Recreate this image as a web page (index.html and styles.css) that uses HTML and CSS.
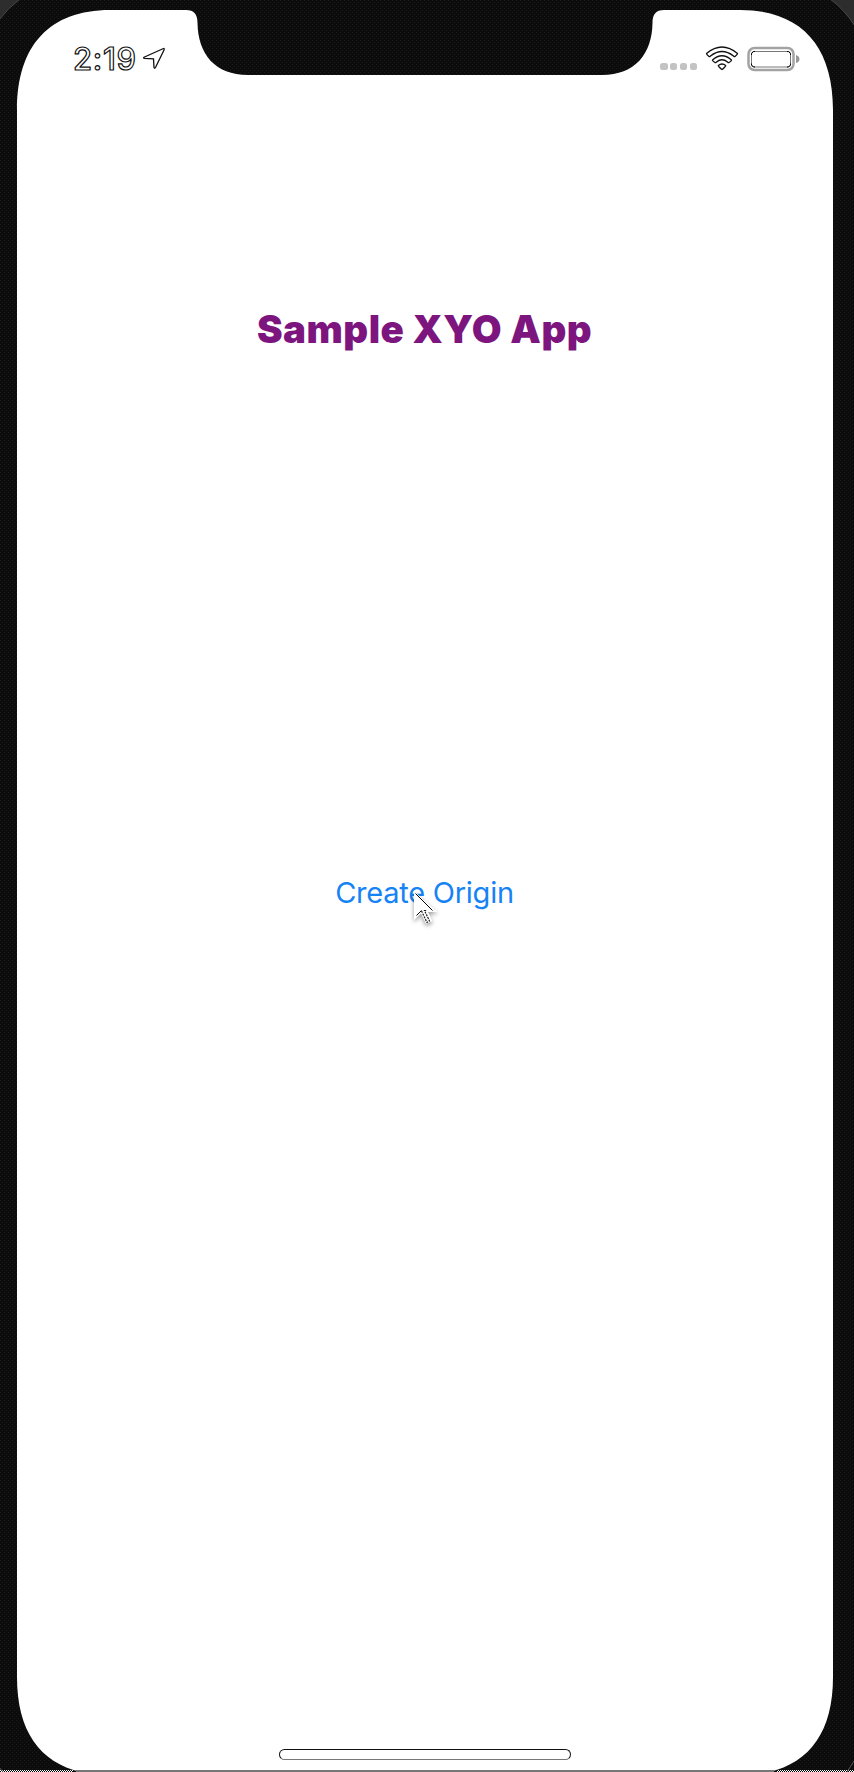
FILE: index.html
```html
<!DOCTYPE html>
<html lang="en">
<head>
<meta charset="utf-8">
<title>Sample XYO App</title>
<link rel="stylesheet" href="styles.css">
</head>
<body>
<main class="phone">
  <svg class="frame" viewBox="0 0 854 1772" aria-hidden="true">
    <defs>
      <pattern id="grain" width="4" height="4" patternUnits="userSpaceOnUse"><path fill="#0c0c0c" d="M0 0h4v4H0z"/><path fill="#191919" d="M0 0h1v1H0zM2 2h1v1H2z"/></pattern>
      <pattern id="check" width="2" height="2" patternUnits="userSpaceOnUse"><path fill="#000" d="M0 0h2v2H0z"/><path fill="#fff" d="M0 0h1v1H0zM1 1h1v1H1z"/></pattern>
    </defs>
    <path fill="url(#grain)" d="M0 0h854v1772H0z"/>
    <path fill="#2d2d2d" stroke="#494949" d="M-1 20Q8 8 20-1H-1zM830-1Q844 9 855 26V-1z"/>
    <path fill="#fff" d="M17 110C17 45 50 10 110 10H186C194 10 197.500 14 197.500 23C198 54 215 75 248 75H602C635 75 652 54 652.500 23C652.500 14 656 10 664 10H740C800 10 833 45 833 110V1677C833 1742 800 1775 740 1775H110C50 1775 17 1742 17 1677Z"/>
    <path fill="#777" d="M76 1770h698v2H76z"/>
    <path fill="url(#check)" d="M0 1770h73v2H0zM777 1770h77v2h-77z"/>
    <path stroke="#555" d="M847 1772l7-11M0 1768l3 4"/>
  </svg>
  <header class="status">
    <div class="clock">
      <span class="time">2:19</span>
      <svg class="location" viewBox="0 0 24 24"><path d="M21.500 1.500L2 10.200Q1 11 2.500 11.300L11.500 11.800L12 20.500Q12.600 22 13.500 20.500L22 3Q22.500 1.200 21.500 1.500Z"/></svg>
    </div>
    <div class="indicators">
      <span class="signal"><i></i><i></i><i></i><i></i></span>
      <svg class="wifi" viewBox="0 0 34 26">
        <path d="M1.500 7.500Q17-5.500 32.500 7.500Q32.500 8.500 30 10.500Q29.500 11 28.500 10Q17 1 5.500 10Q4.500 11 4 10.500Q1.500 8.500 1.500 7.500Z"/>
        <path d="M7.500 14Q17 5.500 26.500 14Q27 14.500 24 16.500Q23.500 17 22.500 16Q17 11.500 11.500 16Q10.500 17 10 16.500Q7 14.500 7.500 14Z"/>
        <path d="M13.300 19.500Q17 16.500 20.700 19.500Q21.200 20 17.500 23.300Q17 23.700 16.500 23.300Q12.800 20 13.300 19.500Z"/>
      </svg>
      <svg class="battery" viewBox="0 0 54 26">
        <rect x="1.500" y="2" width="45" height="22" rx="6" fill="#fff" stroke="#a3a3a3" stroke-width="2.500"/>
        <rect x="4.500" y="5.500" width="39" height="15.500" rx="2.500" fill="#fff" stroke="#777" stroke-width="1"/>
        <path fill="none" stroke="#000" d="M4.500 9V7.500L6.500 5.500H8M40 5.500h1.500l2 2V9M43.500 17.500v1.500l-2 2H40M8 21H6.500l-2-2V17.500"/>
        <path fill="#989898" d="M49 9Q52.500 10 52.500 13T49 17Z"/>
      </svg>
    </div>
  </header>
  <h1 class="title">Sample XYO App</h1>
  <div class="action">
    <button class="link">Create Origin</button>
    <svg class="cursor" viewBox="0 0 30 40">
      <path fill="#fff" d="M2 1V30L9 23.500L14 34L20.500 31L16 22H25.500Z"/>
      <path fill="none" stroke="#000" d="M3.500 3.500L20.500 20.500M4.500 25.500L9.500 20.500"/>
      <path fill="none" stroke="#222" stroke-width="1.200" stroke-dasharray="2 1" d="M9.500 21L15 32.500L17.500 31L12.500 20.500H15"/>
    </svg>
  </div>
  <div class="home"></div>
</main>
</body>
</html>
```

FILE: styles.css
```css
body { margin: 0; background: #0b0b0b; overflow: hidden; }
.phone {
  position: relative;
  box-sizing: border-box;
  width: 854px;
  height: 1772px;
  padding: 44px 53px 12px 73px;
  display: flex;
  flex-direction: column;
  align-items: center;
  font-family: Inter, "Liberation Sans", sans-serif;
}
.frame { position: absolute; inset: 0; width: 854px; height: 1772px; z-index: -1; }
.status { width: 100%; height: 30px; display: flex; justify-content: space-between; align-items: center; }
.clock, .indicators { display: flex; align-items: center; }
.clock { gap: 5px; }
.time {
  font-size: 31px;
  line-height: 30px;
  font-weight: 500;
  letter-spacing: 0.700px;
  color: #fff;
  -webkit-text-stroke: 1.200px #111;
}
.location { width: 24px; height: 24px; fill: #fff; stroke: #111; stroke-width: 1.300; }
.signal { display: flex; gap: 2.500px; margin: 15px 8px 0 0; }
.signal i { width: 7.300px; height: 7px; border-radius: 2.500px; background: #c3c3c3; }
.wifi { width: 34px; height: 26px; margin-right: 8px; fill: #fff; stroke: #111; stroke-width: 1.300; }
.battery { width: 54px; height: 26px; }
.title {
  margin: 231px 0 0 -25px;
  font-size: 38.500px;
  line-height: 48px;
  font-weight: 900;
  letter-spacing: 0.500px;
  color: #7d157f;
  white-space: nowrap;
}
.action { position: relative; margin: 517px 0 0 -25px; }
.link {
  display: block;
  padding: 0;
  border: 0;
  background: none;
  font: 400 29px/46px Inter, "Liberation Sans", sans-serif;
  letter-spacing: -0.250px;
  color: #1683f5;
  white-space: nowrap;
}
.cursor { position: absolute; left: 77px; top: 20px; width: 30px; height: 40px; filter: drop-shadow(0 2px 2px #0006); }
.home {
  box-sizing: border-box;
  width: 292px;
  height: 11px;
  margin: auto 0 0 -24px;
  border: 1px solid #111;
  border-bottom-color: #777;
  border-radius: 6px;
}
```
